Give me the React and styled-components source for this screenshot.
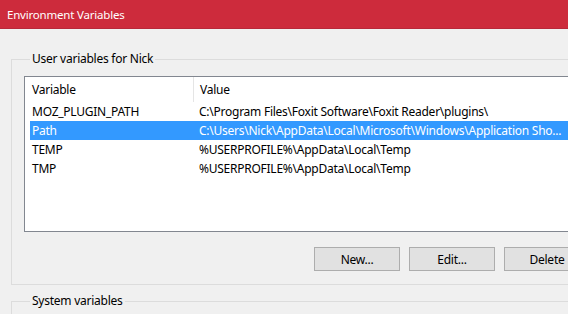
import React from "react";
import styled, { createGlobalStyle } from "styled-components";

const GlobalStyle = createGlobalStyle`
  html, body {
    margin: 0;
    padding: 0;
    background: #f0f0f0;
    overflow: hidden;
  }
  body {
    font-family: "Noto Sans", "Open Sans", sans-serif;
    font-size: 12px;
    letter-spacing: -0.25px;
    color: #000;
  }
`;

const Window = styled.div`
  width: 616px;
  height: 314px;
  background: #f0f0f0;
  overflow: hidden;
`;

const TitleBar = styled.div`
  height: 29px;
  box-sizing: border-box;
  display: flex;
  align-items: center;
  padding-left: 7px;
  background: #cd2b3c;
  border-bottom: 1px solid #b8283a;
  color: #fff;
  font-size: 11.5px;
  letter-spacing: -0.2px;
`;

const Content = styled.div`
  padding: 22px 0 0 11px;
  display: flex;
  flex-direction: column;
  gap: 8px;
`;

const GroupBox = styled.fieldset`
  margin: 0;
  width: 592px;
  box-sizing: border-box;
  border: 1px solid #dcdcdc;
  padding: ${(props) => props.$padding || "9px 12px 13px 12px"};
  min-inline-size: 0;

  legend {
    margin-left: 6px;
    padding: 0 2px;
    line-height: 16px;
  }
`;

const ListView = styled.div`
  height: 156px;
  box-sizing: border-box;
  border: 1px solid #828790;
  background: #fff;
  overflow: hidden;
`;

const Row = styled.div`
  display: grid;
  grid-template-columns: 163px 1fr;
  height: ${(props) => (props.$header ? "25px" : "19px")};
  align-items: center;
  margin-left: 5px;
  white-space: nowrap;
  background: ${(props) => (props.$selected ? "#3399ff" : "transparent")};
  color: ${(props) => (props.$selected ? "#fff" : "#000")};
`;

const Cell = styled.div`
  padding-left: ${(props) => (props.$first ? "2px" : "6px")};
  height: 100%;
  display: flex;
  align-items: center;
  overflow: hidden;
  border-left: ${(props) => (props.$divider ? "1px solid #e5e5e5" : "none")};
`;

const ButtonRow = styled.div`
  display: flex;
  justify-content: flex-end;
  gap: 9px;
  margin-top: 15px;
`;

const Button = styled.button`
  width: 86px;
  height: 24px;
  box-sizing: border-box;
  border: 1px solid #adadad;
  background: #e1e1e1;
  font-family: inherit;
  font-size: 12px;
  letter-spacing: inherit;
  color: #000;
  padding: 0;
`;

const rows = [
  { name: "MOZ_PLUGIN_PATH", value: "C:\\Program Files\\Foxit Software\\Foxit Reader\\plugins\\" },
  { name: "Path", value: "C:\\Users\\Nick\\AppData\\Local\\Microsoft\\Windows\\Application Sho...", selected: true },
  { name: "TEMP", value: "%USERPROFILE%\\AppData\\Local\\Temp" },
  { name: "TMP", value: "%USERPROFILE%\\AppData\\Local\\Temp" },
];

const App = () => {
  return (
    <Window>
      <GlobalStyle />
      <TitleBar>Environment Variables</TitleBar>
      <Content>
        <GroupBox>
          <legend>User variables for Nick</legend>
          <ListView>
            <Row $header>
              <Cell $first>Variable</Cell>
              <Cell $divider>Value</Cell>
            </Row>
            {rows.map((r) => (
              <Row key={r.name} $selected={r.selected}>
                <Cell $first>{r.name}</Cell>
                <Cell>{r.value}</Cell>
              </Row>
            ))}
          </ListView>
          <ButtonRow>
            <Button>New...</Button>
            <Button>Edit...</Button>
            <Button>Delete</Button>
          </ButtonRow>
        </GroupBox>
        <GroupBox $padding="9px 12px 40px 12px">
          <legend>System variables</legend>
        </GroupBox>
      </Content>
    </Window>
  );
};

export default App;
